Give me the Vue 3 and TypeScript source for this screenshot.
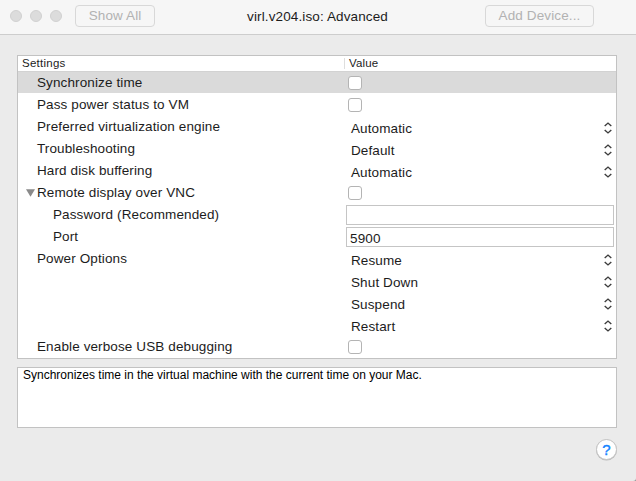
<script setup lang="ts">
import { ref } from 'vue'

type Kind = 'check' | 'select' | 'field'

interface Row {
  label: string
  kind: Kind
  value?: string
  nested?: boolean
  expanded?: boolean
}

const rows: Row[] = [
  { label: 'Synchronize time', kind: 'check' },
  { label: 'Pass power status to VM', kind: 'check' },
  { label: 'Preferred virtualization engine', kind: 'select', value: 'Automatic' },
  { label: 'Troubleshooting', kind: 'select', value: 'Default' },
  { label: 'Hard disk buffering', kind: 'select', value: 'Automatic' },
  { label: 'Remote display over VNC', kind: 'check', expanded: true },
  { label: 'Password (Recommended)', kind: 'field', value: '', nested: true },
  { label: 'Port', kind: 'field', value: '5900', nested: true },
  { label: 'Power Options', kind: 'select', value: 'Resume' },
  { label: '', kind: 'select', value: 'Shut Down' },
  { label: '', kind: 'select', value: 'Suspend' },
  { label: '', kind: 'select', value: 'Restart' },
  { label: 'Enable verbose USB debugging', kind: 'check' },
]

const selected = ref(0)
</script>

<template>
  <div class="window">
    <header class="titlebar">
      <div class="side">
        <div class="lights"><i></i><i></i><i></i></div>
        <button class="tool show-all" disabled>Show All</button>
      </div>
      <h1 class="title">virl.v204.iso: Advanced</h1>
      <div class="side right">
        <button class="tool add-device" disabled>Add Device...</button>
      </div>
    </header>

    <main class="body">
      <section class="panel">
        <div class="head">
          <span class="head-name">Settings</span>
          <span class="head-value">Value</span>
        </div>
        <div
          v-for="(row, i) in rows"
          :key="i"
          class="row"
          :class="{ selected: i === selected }"
          @click="selected = i"
        >
          <div class="name" :class="{ nested: row.nested }">
            <span class="gutter">
              <svg v-if="row.expanded" width="9" height="8" viewBox="0 0 9 8">
                <path d="M0 .2H9L4.5 7.8Z" fill="#8a8a8a" />
              </svg>
            </span>
            <span>{{ row.label }}</span>
          </div>
          <div class="value">
            <span v-if="row.kind === 'check'" class="check"></span>
            <div v-else-if="row.kind === 'field'" class="field">{{ row.value }}</div>
            <div v-else class="select">
              <span>{{ row.value }}</span>
              <svg width="8" height="12" viewBox="0 0 8 12" fill="none" stroke="#3c3c3c" stroke-width="1.4">
                <path d="M.7 4.1L4 1.1L7.3 4.1M.7 7.9L4 10.9L7.3 7.9" />
              </svg>
            </div>
          </div>
        </div>
      </section>

      <section class="description">
        Synchronizes time in the virtual machine with the current time on your Mac.
      </section>

      <button class="help">?</button>
    </main>
  </div>
</template>

<style>
body {
  margin: 0;
  background: #9a9a9a;
}
</style>

<style scoped>
.window {
  width: 636px;
  height: 481px;
  overflow: hidden;
  display: flex;
  flex-direction: column;
  box-sizing: border-box;
  border-bottom-right-radius: 3px;
  background: #ebebeb;
  color: #1c1c1c;
  font-family: 'Liberation Sans', Arial, sans-serif;
  font-size: 13.5px;
  letter-spacing: 0.12px;
}
.titlebar {
  display: flex;
  height: 34px;
  flex: none;
  border-bottom: 1px solid #cdcdcd;
  background: #f6f6f6;
}
.side {
  display: flex;
  width: 236px;
  box-sizing: border-box;
  padding: 5px 0 0 10px;
}
.side.right {
  justify-content: flex-end;
  padding: 5px 42px 0 0;
}
.lights {
  display: flex;
  gap: 8px;
  padding-top: 5px;
  margin-right: 13px;
}
.lights i {
  width: 12px;
  height: 12px;
  box-sizing: border-box;
  border: 1px solid #d1d1d1;
  border-radius: 50%;
  background: #dcdcdc;
}
.tool {
  height: 22px;
  padding: 0;
  border: 1px solid #d8d8d8;
  border-radius: 4px;
  background: #f6f6f6;
  color: #b2b2b2;
  font: inherit;
  letter-spacing: 0.12px;
  line-height: 20px;
}
.show-all {
  width: 80px;
}
.add-device {
  width: 109px;
}
.title {
  flex: 1;
  margin: 0;
  padding-top: 7px;
  font-size: 13.5px;
  font-weight: 400;
  line-height: 20px;
  letter-spacing: 0.12px;
  text-align: center;
  text-indent: -1px;
  white-space: nowrap;
}
.body {
  display: flex;
  flex-direction: column;
  padding: 20px 19px 0 17px;
}
.panel {
  height: 304px;
  box-sizing: border-box;
  border: 1px solid #c2c2c2;
  background: #fff;
}
.head {
  display: grid;
  grid-template-columns: 326px 1fr;
  height: 15px;
  font-size: 11.5px;
  line-height: 15px;
}
.head-name {
  padding-left: 4px;
  letter-spacing: 0.25px;
}
.head-value {
  height: 11px;
  margin-top: 2px;
  padding-left: 4px;
  border-left: 1px solid #dedede;
  line-height: 11px;
}
.row {
  display: grid;
  grid-template-columns: 328px 1fr;
  height: 22px;
}
.row.selected {
  background: #dadada;
  box-shadow: inset 0 1px #d2d2d2;
}
.name {
  display: flex;
  line-height: 23px;
  white-space: nowrap;
}
.gutter {
  display: flex;
  align-items: center;
  width: 11px;
  padding-left: 8px;
}
.nested .gutter {
  width: 27px;
}
.value {
  display: flex;
  align-items: flex-start;
}
.check {
  width: 14px;
  height: 14px;
  box-sizing: border-box;
  margin: 5px 0 0 2px;
  border: 1px solid #b4b4b4;
  border-radius: 3px;
  background: #fff;
}
.field {
  width: 268px;
  height: 20px;
  box-sizing: border-box;
  margin-top: 2px;
  padding-left: 3px;
  border: 1px solid #c5c5c5;
  line-height: 21px;
}
.select {
  display: flex;
  flex: 1;
  justify-content: space-between;
  align-items: center;
  height: 22px;
  margin-top: 2px;
  padding: 0 4px 0 5px;
}
.description {
  height: 61px;
  box-sizing: border-box;
  margin-top: 8px;
  padding: 0 5px;
  border: 1px solid #c2c2c2;
  background: #fff;
  color: #000;
  font-size: 12px;
  line-height: 15px;
  letter-spacing: 0;
  white-space: nowrap;
}
.help {
  align-self: flex-end;
  width: 21px;
  height: 21px;
  margin-top: 11px;
  padding: 0;
  border: 1px solid #c4c4c4;
  border-radius: 50%;
  background: #fff;
  box-shadow: 0 0.5px 0.5px #bbb;
  color: #1484ff;
  font: 15px/19px 'Liberation Sans', Arial, sans-serif;
  -webkit-text-stroke: 0.4px #1484ff;
}
</style>
